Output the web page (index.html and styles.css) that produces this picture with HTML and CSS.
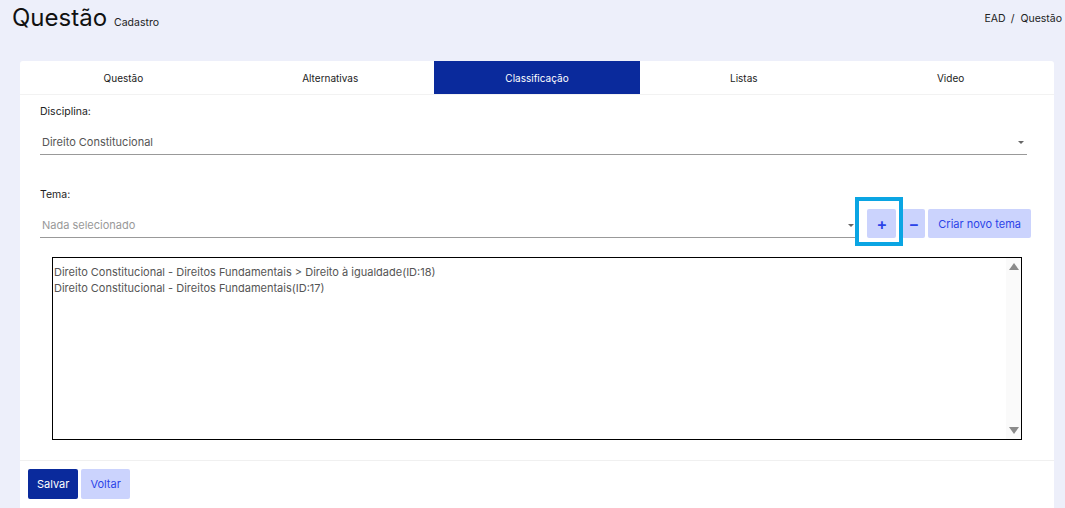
FILE: index.html
```html
<html>

<head>
	<meta charset="utf-8">
	<link rel="stylesheet" href="styles.css">
</head>

<body>
	<div class="page-head">
		<div class="page-title">
			<h1>Questão</h1>
			<small>Cadastro</small>
		</div>
		<div class="breadcrumb">
			<span>EAD</span>
			<span class="sep">/</span>
			<span>Questão</span>
		</div>
	</div>

	<div class="card">
		<div class="tabs">
			<div class="tab">Questão</div>
			<div class="tab">Alternativas</div>
			<div class="tab active">Classificação</div>
			<div class="tab">Listas</div>
			<div class="tab">Video</div>
		</div>

		<div class="card-body">
			<div class="field">
				<label>Disciplina:</label>
				<div class="select">
					<span>Direito Constitucional</span>
					<span class="caret"></span>
				</div>
			</div>

			<div class="field">
				<label>Tema:</label>
				<div class="tema-row">
					<div class="select placeholder">
						<span>Nada selecionado</span>
						<span class="caret"></span>
					</div>
					<div class="btn-wrap marked">
						<button class="btn btn-light btn-sq">+</button>
					</div>
					<button class="btn btn-light btn-minus">−</button>
					<button class="btn btn-light btn-new">Criar novo tema</button>
				</div>
			</div>

			<div class="listbox">
				<div class="options">
					<div>Direito Constitucional - Direitos Fundamentais &gt; Direito à igualdade(ID:18)</div>
					<div>Direito Constitucional - Direitos Fundamentais(ID:17)</div>
				</div>
				<div class="scroll">
					<span class="arrow up"></span>
					<span class="arrow down"></span>
				</div>
			</div>
		</div>

		<div class="card-foot">
			<button class="btn btn-dark">Salvar</button>
			<button class="btn btn-light">Voltar</button>
		</div>
	</div>
</body>

</html>
```

FILE: styles.css
```css
body {
	margin: 0;
	background-color: #edeffa;
	font-family: "Inter", "Open Sans", sans-serif;
	color: #222;
}

.page-head {
	display: flex;
	justify-content: space-between;
	align-items: flex-start;
	height: 61px;
	padding: 0 3px 0 12px;
}

.page-title {
	display: flex;
	align-items: baseline;
	padding-top: 3px;
}

.page-title h1 {
	margin: 0;
	font-size: 24px;
	font-weight: 400;
	color: #111;
}

.page-title small {
	margin-left: 7px;
	font-size: 10.5px;
	color: #222;
}

.breadcrumb {
	padding-top: 12px;
	font-size: 10.5px;
	color: #222;
}

.breadcrumb .sep {
	margin: 0 3px 0 2px;
}

.card {
	margin: 0 11px 0 20px;
	background-color: #fff;
	border-radius: 3px 3px 0 0;
}

.tabs {
	display: grid;
	grid-template-columns: repeat(5, 1fr);
	height: 33px;
	border-bottom: 1px solid #f2f2f2;
}

.tab {
	display: flex;
	align-items: center;
	justify-content: center;
	font-size: 10px;
	color: #222;
}

.tab.active {
	background-color: #0a2a9c;
	color: #fff;
}

.card-body {
	padding: 10px 27px 20px 20px;
	border-bottom: 1px solid #f0f0f0;
}

.field label {
	display: block;
	font-size: 10.5px;
	color: #222;
}

.field + .field {
	margin-top: 33px;
}

.select {
	display: flex;
	align-items: center;
	justify-content: space-between;
	height: 24px;
	margin-top: 8px;
	padding: 4px 2px 0 2px;
	border-bottom: 1px solid #999;
	font-size: 11px;
	color: #555;
}

.select.placeholder {
	color: #999;
}

.caret {
	width: 0;
	height: 0;
	margin-right: 1px;
	border-left: 3.5px solid transparent;
	border-right: 3.5px solid transparent;
	border-top: 3.5px solid #666;
}

.tema-row {
	display: flex;
	align-items: flex-end;
	margin-right: -4px;
}

.tema-row .select {
	flex: 1;
	margin-right: 10px;
}

.btn {
	height: 29px;
	padding: 0 9px;
	border: 0;
	border-radius: 2px;
	font-family: inherit;
	font-size: 11px;
	cursor: pointer;
}

.btn-light {
	background-color: #cbd3fd;
	color: #2b44e8;
}

.btn-dark {
	background-color: #0a2a9c;
	color: #fff;
}

.btn-sq {
	width: 29px;
	padding: 0;
	font-size: 16px;
	font-weight: 600;
}

.btn-minus {
	width: 23px;
	margin-left: 6px;
	padding: 0;
	font-size: 16px;
	font-weight: 600;
}

.btn-new {
	margin-left: 3px;
	padding: 0 10px;
}

.btn-wrap {
	position: relative;
	display: flex;
}

.btn-wrap.marked::after {
	content: "";
	position: absolute;
	left: -12px;
	top: -12px;
	width: 40px;
	height: 41px;
	border: 4px solid #0aa5e3;
	pointer-events: none;
}

.listbox {
	display: flex;
	height: 181px;
	margin: 19px 5px 0 12px;
	border: 1px solid #000;
}

.options {
	flex: 1;
	padding: 6px 0 0 1px;
	font-size: 11px;
	line-height: 16px;
	color: #555;
}

.scroll {
	display: flex;
	flex-direction: column;
	justify-content: space-between;
	align-items: center;
	width: 15px;
	padding: 5px 0;
	background-color: #fafafa;
}

.arrow {
	width: 0;
	height: 0;
	border-left: 5px solid transparent;
	border-right: 5px solid transparent;
}

.arrow.up {
	border-bottom: 7px solid #8a8a8a;
}

.arrow.down {
	border-top: 7px solid #8a8a8a;
}

.card-foot {
	display: flex;
	gap: 3px;
	padding: 8px 8px 10px 8px;
}

.card-foot .btn {
	height: 30px;
}
```
